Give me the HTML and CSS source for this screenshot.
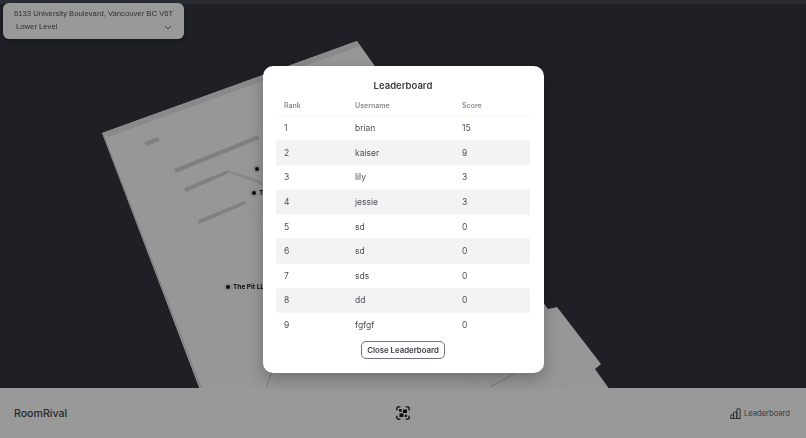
FILE: index.html
```html
<!doctype html>
<html>
  <head>
    <meta charset="utf-8">
    <title>RoomRival</title>
    <link rel="stylesheet" href="styles.css">
  </head>
  <body>
    <div class="app">
      <main class="map">
        <svg class="floor" width="806" height="388" viewBox="0 0 806 388">
          <polygon class="slab" points="102,133 357,41 543,302 548,309 557,307 601,364 595,369 610,390 200,390"/>
          <polygon class="rim" points="102,133 357,41 360,46 108,137"/>
          <line class="thin" x1="135" y1="123" x2="198" y2="225"/>
          <line class="thin" x1="245" y1="202" x2="262" y2="225"/>
          <line class="thin" x1="467" y1="373" x2="477" y2="387"/>
          <line class="thin" x1="562" y1="387" x2="595" y2="368"/>
          <line class="edge" x1="201" y1="388" x2="103" y2="134"/>
          <polygon class="wall" points="144,142 158,137 160,141 146,146"/>
          <polygon class="wall" points="174,169 258,135 260,139 176,173"/>
          <polygon class="wall" points="184,188 228,170 229,173 186,192"/>
          <polygon class="wall-soft" points="228,170 262,181 262,185 229,173"/>
          <polygon class="wall" points="198,220 245,201 246,204 199,224"/>
          <line class="seam" x1="490" y1="387" x2="514" y2="374"/>
          <line class="seam" x1="272" y1="372" x2="266" y2="387"/>
          <line class="thin" x1="543" y1="343" x2="562" y2="387"/>
        </svg>
        <span class="pin pin-a"><i></i></span>
        <span class="pin pin-b"><i></i>T</span>
        <span class="pin pin-c"><i></i>The Pit LL</span>
      </main>

      <footer class="bar">
        <span class="brand">RoomRival</span>
        <svg class="scan" width="14" height="14" viewBox="0 0 16 16">
          <path d="M1 5V2.500A1.500 1.500 0 0 1 2.500 1H5M11 1h2.500A1.500 1.500 0 0 1 15 2.500V5M15 11v2.500a1.500 1.500 0 0 1-1.500 1.500H11M5 15H2.500A1.500 1.500 0 0 1 1 13.500V11"/>
          <rect class="dot" x="3.500" y="3.500" width="3" height="3"/>
          <rect class="dot" x="8" y="4" width="4.500" height="4"/>
          <rect class="dot" x="4" y="8.500" width="4.500" height="4"/>
          <rect class="dot" x="10" y="10" width="2.500" height="2.500"/>
        </svg>
        <span class="board-link">
          <svg width="11" height="11" viewBox="0 0 12 12">
            <path d="M1 11.500V7.500h3v4M4 11.500V4.500h3.500v7M7.500 11.500V1h3.500v10.500zM.5 11.500h11"/>
          </svg>
          Leaderboard
        </span>
      </footer>

      <div class="place">
        <div class="address">6133 University Boulevard, Vancouver BC V6T</div>
        <div class="level">
          <span>Lower Level</span>
          <svg width="8" height="5" viewBox="0 0 8 5"><path d="M1 1l3 3 3-3"/></svg>
        </div>
      </div>

      <div class="scrim"></div>

      <section class="modal">
        <h2>Leaderboard</h2>
        <table>
          <thead>
            <tr><th>Rank</th><th>Username</th><th>Score</th></tr>
          </thead>
          <tbody>
            <tr><td>1</td><td>brian</td><td>15</td></tr>
            <tr><td>2</td><td>kaiser</td><td>9</td></tr>
            <tr><td>3</td><td>lily</td><td>3</td></tr>
            <tr><td>4</td><td>jessie</td><td>3</td></tr>
            <tr><td>5</td><td>sd</td><td>0</td></tr>
            <tr><td>6</td><td>sd</td><td>0</td></tr>
            <tr><td>7</td><td>sds</td><td>0</td></tr>
            <tr><td>8</td><td>dd</td><td>0</td></tr>
            <tr><td>9</td><td>fgfgf</td><td>0</td></tr>
          </tbody>
        </table>
        <button>Close Leaderboard</button>
      </section>
    </div>
  </body>
</html>
```

FILE: styles.css
```css
* {
  box-sizing: border-box;
}

html,
body {
  margin: 0;
  padding: 0;
  width: 100%;
  height: 100%;
  overflow: hidden;
  background: #343640;
}
body {
  font-family: Inter, "Liberation Sans", sans-serif;
  color: #374151;
}
.app {
  position: relative;
  width: 806px;
  height: 438px;
  display: flex;
  flex-direction: column;
}
.map {
  position: relative;
  flex: 1;
  background: #343640;
  border-top: 4px solid #464a55;
}
.floor {
  position: absolute;
  top: -4px;
  left: 0;
  display: block;
}
.slab {
  fill: #fcfcfc;
}
.rim {
  fill: #e6e6e6;
}
.wall {
  fill: #d6d6d6;
}
.wall-soft {
  fill: #e4e4e4;
}
.thin {
  stroke: #f2f2f2;
  stroke-width: 1;
}
.edge {
  stroke: #d0d0d0;
  stroke-width: 1;
}
.seam {
  stroke: #c8c8c8;
  stroke-width: 1;
}
.pin {
  position: absolute;
  display: flex;
  align-items: center;
  gap: 3px;
  font-size: 6.500px;
  font-weight: 700;
  color: #111;
  will-change: transform;
}
.pin i {
  width: 4px;
  height: 4px;
  border-radius: 50%;
  background: #111;
  box-shadow: 0 0 0 2px rgba(0, 0, 0, 0.08);
}
.pin-a {
  left: 255px;
  top: 163px;
}
.pin-b {
  left: 252px;
  top: 185px;
}
.pin-c {
  left: 226px;
  top: 279px;
}
.bar {
  height: 50px;
  display: flex;
  align-items: center;
  justify-content: space-between;
  padding: 0 16px 0 14px;
  background: #fff;
}
.brand {
  width: 122px;
  font-size: 10.600px;
  font-weight: 500;
  color: #3f4450;
}
.scan path {
  fill: none;
  stroke: #111;
  stroke-width: 1.500;
}
.scan .dot {
  fill: #111;
}
.board-link {
  width: 120px;
  display: flex;
  justify-content: flex-end;
  align-items: center;
  gap: 3px;
  font-size: 7.600px;
  color: #5f6470;
}
.board-link svg path {
  fill: none;
  stroke: #3f4450;
  stroke-width: 1;
}
.place {
  position: absolute;
  left: 3px;
  top: 3px;
  width: 181px;
  height: 36px;
  padding: 5px 11px;
  border-radius: 6px;
  background: #fff;
  box-shadow: 0 2px 4px rgba(0, 0, 0, 0.3);
  font-family: "Liberation Sans", Arial, sans-serif;
  font-size: 7.700px;
  line-height: 12px;
  color: #4f5460;
  will-change: transform;
}
.address {
  white-space: nowrap;
}
.level {
  display: flex;
  justify-content: space-between;
  align-items: center;
  padding: 1px 1px 0 2px;
}
.level path {
  fill: none;
  stroke: #5f6470;
  stroke-width: 1;
}
.scrim {
  position: absolute;
  top: 0;
  left: 0;
  width: 100%;
  height: 100%;
  background: rgba(0, 0, 0, 0.4);
}
.modal {
  position: absolute;
  left: 263px;
  top: 66px;
  width: 281px;
  height: 307px;
  padding: 14px 14px 0 13px;
  border-radius: 10px;
  background: #fff;
  box-shadow: 0 6px 16px rgba(0, 0, 0, 0.25);
  text-align: center;
  will-change: transform;
}
.modal h2 {
  margin: 0;
  font-size: 9.500px;
  line-height: 12px;
  font-weight: 600;
  color: #3a3d46;
}
table {
  width: 100%;
  margin-top: 3px;
  border-collapse: collapse;
  table-layout: fixed;
  text-align: left;
}
th {
  height: 21px;
  padding: 0 8px;
  font-size: 7px;
  font-weight: 600;
  color: #8b8b8b;
}
th:nth-child(1),
td:nth-child(1) {
  width: 71px;
}
th:nth-child(2),
td:nth-child(2) {
  width: 107px;
}
td {
  height: 24.600px;
  padding: 0 8px;
  font-size: 8.500px;
  color: #4b4f58;
}
tr {
  border-bottom: 1px solid #f6f6f6;
}
tbody tr:last-child {
  border-bottom: none;
}
tbody tr:nth-child(even) {
  background: #f3f3f3;
}
button {
  display: block;
  margin: 4px auto 0;
  width: 84px;
  height: 18px;
  padding: 0;
  border: 1px solid #6b7280;
  border-radius: 5px;
  background: #fff;
  font-family: inherit;
  font-size: 7.800px;
  font-weight: 600;
  color: #3a3d46;
}
```
